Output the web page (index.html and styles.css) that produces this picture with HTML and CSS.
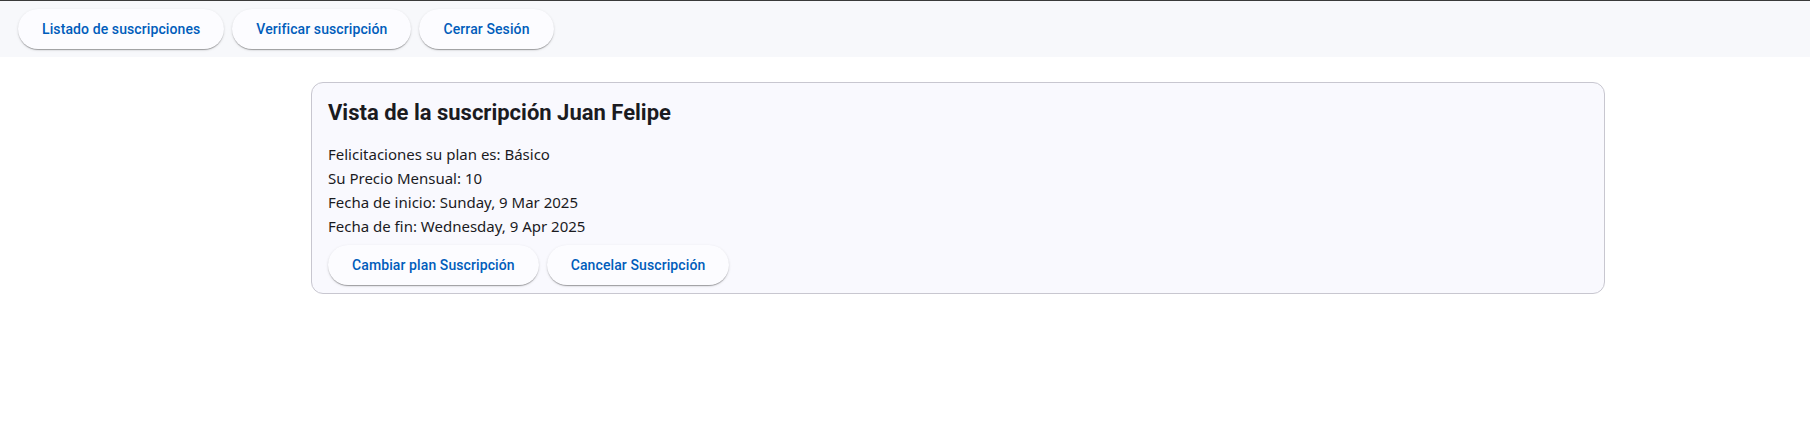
FILE: index.html
```html
<!DOCTYPE html>
<html lang="es">
<head>
<meta charset="utf-8">
<title>Vista de la suscripción</title>
<link rel="stylesheet" href="styles.css">
</head>
<body>
<nav class="topbar">
  <button class="btn">Listado de suscripciones</button>
  <button class="btn">Verificar suscripción</button>
  <button class="btn">Cerrar Sesión</button>
</nav>
<main class="main">
  <section class="card">
    <h2 class="card-title">Vista de la suscripción Juan Felipe</h2>
    <div class="card-content">
      <p class="line">Felicitaciones su plan es: Básico</p>
      <p class="line">Su Precio Mensual: 10</p>
      <p class="line">Fecha de inicio: Sunday, 9 Mar 2025</p>
      <p class="line">Fecha de fin: Wednesday, 9 Apr 2025</p>
    </div>
    <div class="card-actions">
      <button class="btn">Cambiar plan Suscripción</button>
      <button class="btn">Cancelar Suscripción</button>
    </div>
  </section>
</main>
</body>
</html>
```

FILE: styles.css
```css
html, body {
  margin: 0;
  padding: 0;
  background: #ffffff;
}
body {
  border-top: 1px solid #3a3a3a;
  font-family: Roboto, "Liberation Sans", sans-serif;
}
.topbar {
  background: #f7f8fb;
  height: 56px;
  box-sizing: border-box;
  padding: 8px 18px 0;
  display: flex;
  align-items: flex-start;
  gap: 8px;
}
.btn {
  height: 40px;
  padding: 0 24px;
  border: none;
  border-radius: 20px;
  background: #fcfcff;
  color: #005cbb;
  font-family: Roboto, "Liberation Sans", sans-serif;
  font-weight: 500;
  font-size: 14px;
  letter-spacing: 0.1px;
  box-shadow: 0 2px 1px -1px rgba(0,0,0,0.2), 0 1px 1px 0 rgba(0,0,0,0.14), 0 1px 3px 0 rgba(0,0,0,0.12);
  cursor: pointer;
}
.main {
  padding-top: 25px;
  padding-left: 311px;
}
.card {
  width: 1294px;
  box-sizing: border-box;
  height: 212px;
  border: 1px solid #c8c7d0;
  border-radius: 12px;
  background: #f9f9fe;
  padding: 16px 16px 8px;
}
.card-title {
  margin: 0;
  font-family: Roboto, "Liberation Sans", sans-serif;
  font-weight: 700;
  font-size: 22px;
  line-height: 28px;
  color: #1b1b1f;
}
.card-content {
  margin-top: 15px;
}
.line {
  margin: 0;
  font-family: "Noto Sans", "Open Sans", sans-serif;
  font-size: 15px;
  line-height: 24px;
  color: #1b1b1f;
}
.card-actions {
  margin-top: 7px;
  display: flex;
  gap: 8px;
}
```
